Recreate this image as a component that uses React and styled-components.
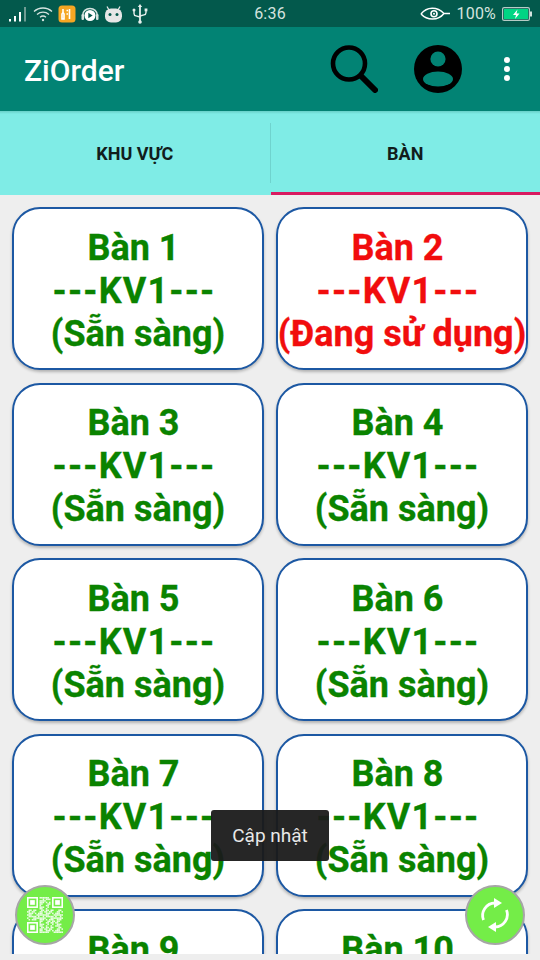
import React from 'react';
import styled, { createGlobalStyle } from 'styled-components';

const GlobalStyle = createGlobalStyle`
  html, body {
    margin: 0;
    padding: 0;
    background: #eeeeee;
  }
  * {
    box-sizing: border-box;
  }
`;

// Main container
const Screen = styled.div`
  position: relative;
  width: 540px;
  height: 960px;
  overflow: hidden;
  display: flex;
  flex-direction: column;
  background: #eeeeee;
  font-family: Roboto, 'Liberation Sans', sans-serif;
`;

// Status bar
const StatusBar = styled.div`
  height: 27px;
  flex: none;
  background: #03594c;
  display: grid;
  grid-template-columns: 1fr auto 1fr;
  align-items: center;
  padding: 0 8px 0 8px;
  color: #d5e3df;
`;

const StatusLeft = styled.div`
  display: flex;
  align-items: center;
  gap: 5px;
`;

const StatusRight = styled.div`
  display: flex;
  align-items: center;
  justify-content: flex-end;
  gap: 6px;
`;

const StatusText = styled.span`
  font-size: 16px;
  line-height: 27px;
  letter-spacing: 0.2px;
`;

// App toolbar
const Toolbar = styled.div`
  height: 84px;
  flex: none;
  background: #028374;
  display: flex;
  align-items: center;
  padding: 0 30px 0 24px;
`;

const Title = styled.div`
  flex: 1;
  color: #fff;
  font-size: 30px;
  font-weight: 500;
  margin-top: 2px;
`;

const ToolIcons = styled.div`
  display: flex;
  align-items: center;
  gap: 36px;
`;

const AccountWrap = styled.div`
  display: flex;
  margin-right: 6px;
`;

// Tabs, the toolbar's shadow falls on their top edge
const Tabs = styled.div`
  height: 84px;
  flex: none;
  background: linear-gradient(#68cfc8 0, #7fece6 3px);
  display: flex;
`;

const Tab = styled.div`
  flex: 1;
  display: flex;
  align-items: center;
  justify-content: center;
  padding-top: 3px;
  font-size: 18px;
  font-weight: 700;
  color: #111d1c;
  border-bottom: 3px solid ${({ $active }) => ($active ? '#d81b60' : 'transparent')};
`;

const TabDivider = styled.div`
  width: 1px;
  height: 60px;
  margin-top: 12px;
  background: #6fd3ce;
  flex: none;
`;

// Table grid
const GridArea = styled.div`
  height: 759px;
  flex: none;
  overflow: hidden;
  padding: 12px 12px 0;
`;

const TableGrid = styled.div`
  display: grid;
  grid-template-columns: 252px 252px;
  grid-auto-rows: 163px;
  column-gap: 12px;
  row-gap: 12.6px;
`;

const TableCard = styled.div`
  background: #fff;
  border: 2px solid #1c58a3;
  border-radius: 28px;
  box-shadow: 0 2px 3px rgba(0, 0, 0, 0.25);
  display: flex;
  flex-direction: column;
  align-items: center;
  justify-content: center;
  padding-top: 5px;
  font-size: 36px;
  font-weight: 700;
  line-height: 43px;
  white-space: nowrap;
  -webkit-text-stroke: 0.3px currentColor;
  color: ${({ $busy }) => ($busy ? '#f10d0d' : '#0a8300')};
`;

// Name and area lines sit a little left of centre, as if they ended in a space
const CardLine = styled.div`
  text-align: center;
  padding-right: ${({ $shift }) => $shift || 0}px;
  letter-spacing: ${({ $spread }) => $spread || 0}px;
`;

// Toast
const Toast = styled.div`
  position: absolute;
  left: 211px;
  top: 810px;
  width: 118px;
  height: 51px;
  background: rgba(26, 26, 26, 0.95);
  border-radius: 3px;
  color: #e8e8e8;
  font-size: 19px;
  display: flex;
  align-items: center;
  justify-content: center;
`;

// Floating buttons
const Fab = styled.div`
  position: absolute;
  top: 885px;
  left: ${({ $left }) => $left}px;
  width: 60px;
  height: 60px;
  border-radius: 50%;
  background: #74ed48;
  border: 2px solid #a6a6a6;
  display: flex;
  align-items: center;
  justify-content: center;
`;

const SignalIcon = () => (
  <svg width="20" height="16" viewBox="0 0 20 16">
    <rect x="1" y="13" width="2" height="2.5" fill="#fff" />
    <rect x="6" y="10" width="2" height="5.5" fill="#fff" />
    <rect x="11" y="6" width="2" height="9.5" fill="#fff" />
    <rect x="16" y="1" width="2" height="14.5" fill="#6f9c93" />
  </svg>
);

const WifiIcon = () => (
  <svg width="20" height="16" viewBox="0 0 20 16" fill="none" stroke="#d5e3df" strokeWidth="1.3">
    <path d="M1 5.5C6 .8 14 .8 19 5.5" />
    <path d="M4 8.5C7.5 5.4 12.5 5.4 16 8.5" />
    <path d="M7 11.2C8.8 9.8 11.2 9.8 13 11.2" />
    <circle cx="10" cy="14" r="1.2" fill="#d5e3df" stroke="none" />
  </svg>
);

const ToolsIcon = () => (
  <svg width="18" height="18" viewBox="0 0 18 18">
    <rect width="17" height="17" x=".5" y=".5" rx="3.5" fill="#f5a623" />
    <path d="M5 4v3M5 7.5 4 9v5h2V9zM11.5 4v10" stroke="#fff" strokeWidth="1.6" fill="none" />
    <path d="M8.5 5.5h1.5M8.5 9h1.5" stroke="#fff" strokeWidth="1.4" />
  </svg>
);

const MusicIcon = () => (
  <svg width="18" height="18" viewBox="0 0 18 18">
    <path d="M1.5 11C1.5 1 16.5 1 16.5 11" fill="none" stroke="#d5e3df" strokeWidth="1.6" />
    <circle cx="9" cy="10.5" r="5.5" fill="#fff" />
    <path d="M7.3 7.8v5.4l4.4-2.7z" fill="#03594c" />
    <rect x=".5" y="9" width="2.5" height="6" rx="1" fill="#d5e3df" />
    <rect x="15" y="9" width="2.5" height="6" rx="1" fill="#d5e3df" />
  </svg>
);

const BotIcon = () => (
  <svg width="19" height="18" viewBox="0 0 19 18">
    <path d="M3 1.5 5 5M16 1.5 14 5" stroke="#e6e6e6" strokeWidth="1.3" />
    <rect x="1" y="3.5" width="17" height="14" rx="6" fill="#e6e6e6" />
    <circle cx="6" cy="9.5" r="1.5" fill="#03594c" />
    <circle cx="13" cy="9.5" r="1.5" fill="#03594c" />
  </svg>
);

const UsbIcon = () => (
  <svg width="16" height="20" viewBox="0 0 16 20" fill="#e6efed" stroke="#e6efed" style={{ marginLeft: 4 }}>
    <path d="M8 3v15" strokeWidth="1.8" />
    <path d="M8 0 5.8 3h4.4z" stroke="none" />
    <path d="M2 7v2.5q0 2 2 2.4L8 13M14 6v2.5q0 2-2 2.4L8 12" fill="none" strokeWidth="1.4" />
    <circle cx="2" cy="6" r="1.5" stroke="none" />
    <rect x="12.6" y="4.5" width="2.8" height="2.8" stroke="none" />
    <circle cx="8" cy="18" r="1.8" stroke="none" />
  </svg>
);

const EyeIcon = () => (
  <svg width="31" height="14" viewBox="0 0 31 14" fill="none" stroke="#fff">
    <path d="M1 7C7-.5 17-.5 24 6.5H30M1 7C7 13.5 18 14 24 6.5" strokeWidth="1.5" />
    <circle cx="14" cy="6.8" r="3" strokeWidth="1.6" />
    <circle cx="14" cy="6.8" r="1" fill="#fff" stroke="none" />
  </svg>
);

const BatteryIcon = () => (
  <svg width="30" height="14" viewBox="0 0 30 14">
    <rect x=".6" y=".6" width="26.8" height="12.8" rx="1.5" fill="none" stroke="#b7cbc6" strokeWidth="1.2" />
    <rect x="2" y="2" width="24" height="10" fill="#00d584" />
    <rect x="28" y="4.5" width="2" height="5" fill="#d5e3df" />
    <path d="M15.5 2.5 11 8h3l-1 4 4.5-5.5h-3z" fill="#fff" />
  </svg>
);

const SearchIcon = () => (
  <svg width="48" height="48" viewBox="0 0 48 48" fill="none" stroke="#000" strokeLinecap="round">
    <circle cx="19" cy="18.5" r="16" strokeWidth="4.6" />
    <path d="M31 31 45 45" strokeWidth="6" />
  </svg>
);

const AccountIcon = () => (
  <svg width="48" height="48" viewBox="0 0 48 48">
    <circle cx="24" cy="24" r="24" fill="#000" />
    <circle cx="24" cy="14" r="7.6" fill="#028374" />
    <ellipse cx="24" cy="34" rx="15" ry="7.6" fill="#028374" />
  </svg>
);

const MoreIcon = () => (
  <svg width="6" height="24" viewBox="0 0 6 24" fill="#fff">
    <circle cx="3" cy="3" r="3" />
    <circle cx="3" cy="12" r="3" />
    <circle cx="3" cy="21" r="3" />
  </svg>
);

// QR code: three finder squares, the data modules are just a fixed scatter
const QR_SIZE = 23;

const inFinder = (x, y) =>
  (x < 8 && y < 8) || (x >= QR_SIZE - 8 && y < 8) || (x < 8 && y >= QR_SIZE - 8);

const qrData = [];
for (let y = 0; y < QR_SIZE; y++) {
  for (let x = 0; x < QR_SIZE; x++) {
    if (!inFinder(x, y) && (x * x * 31 + y * y * 17 + x * y * 7 + x * 5) % 11 < 6) qrData.push([x, y]);
  }
}

const Finder = ({ x, y }) => (
  <g>
    <rect x={x + 0.5} y={y + 0.5} width="6" height="6" fill="none" stroke="#fff" />
    <rect x={x + 2} y={y + 2} width="3" height="3" fill="#fff" />
  </g>
);

const QrIcon = () => (
  <svg width="36" height="36" viewBox="0 0 23 23">
    <Finder x={0} y={0} />
    <Finder x={16} y={0} />
    <Finder x={0} y={16} />
    {qrData.map(([x, y]) => (
      <rect key={`${x}-${y}`} x={x} y={y} width="1" height="1" fill="#fff" opacity="0.85" />
    ))}
  </svg>
);

const SyncIcon = () => (
  <svg width="36" height="36" viewBox="0 0 36 36" fill="#fff">
    <path d="M6.5 23A12.5 12.5 0 0 1 18 6" fill="none" stroke="#fff" strokeWidth="2.8" />
    <path d="M29.5 13A12.5 12.5 0 0 1 18 30" fill="none" stroke="#fff" strokeWidth="2.8" />
    <path d="M17 1 25 6 17 11z" />
    <path d="M19 25 11 30 19 35z" />
  </svg>
);

const tables = Array.from({ length: 10 }, (_, i) => ({
  id: i + 1,
  busy: i === 1,
}));

const App = () => {
  return (
    <Screen>
      <GlobalStyle />
      <StatusBar>
        <StatusLeft>
          <SignalIcon />
          <WifiIcon />
          <ToolsIcon />
          <MusicIcon />
          <BotIcon />
          <UsbIcon />
        </StatusLeft>
        <StatusText>6:36</StatusText>
        <StatusRight>
          <EyeIcon />
          <StatusText>100%</StatusText>
          <BatteryIcon />
        </StatusRight>
      </StatusBar>

      <Toolbar>
        <Title>ZiOrder</Title>
        <ToolIcons>
          <SearchIcon />
          <AccountWrap>
            <AccountIcon />
          </AccountWrap>
          <MoreIcon />
        </ToolIcons>
      </Toolbar>

      <Tabs>
        <Tab>KHU VỰC</Tab>
        <TabDivider />
        <Tab $active>BÀN</Tab>
      </Tabs>

      <GridArea>
        <TableGrid>
          {tables.map((table) => (
            <TableCard key={table.id} $busy={table.busy}>
              <CardLine $shift={9}>Bàn {table.id}</CardLine>
              <CardLine $shift={8} $spread={1.2}>---KV1---</CardLine>
              <CardLine>{table.busy ? '(Đang sử dụng)' : '(Sẵn sàng)'}</CardLine>
            </TableCard>
          ))}
        </TableGrid>
      </GridArea>

      <Toast>Cập nhật</Toast>
      <Fab $left={15}>
        <QrIcon />
      </Fab>
      <Fab $left={465}>
        <SyncIcon />
      </Fab>
    </Screen>
  );
};

export default App;
